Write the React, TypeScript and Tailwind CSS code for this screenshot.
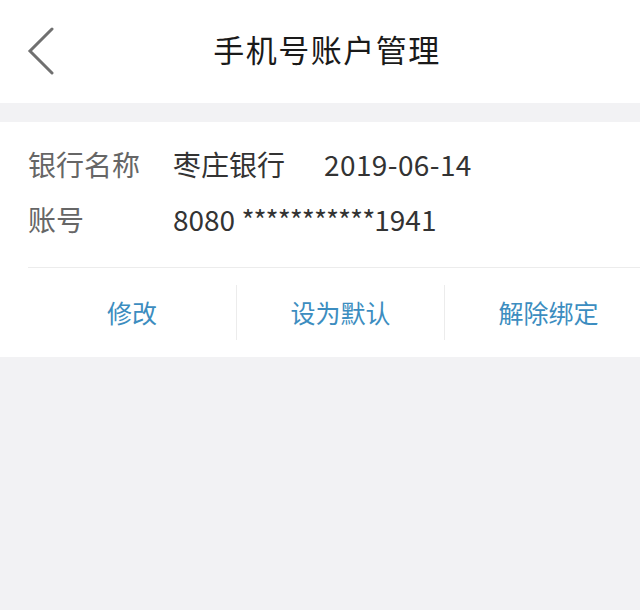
const font = { fontFamily: '"Noto Sans CJK SC", "Noto Sans", sans-serif' };

export default function App() {
    return (
        <div className="w-[640px] h-[610px] bg-[#f2f2f4] overflow-hidden" style={font}>
            <div className="h-[103px] bg-white flex items-center relative pb-[4px]">
                <svg className="absolute left-[26px] top-[27px]" width="30" height="48" viewBox="0 0 30 48">
                    <path d="M26 2 L4 24 L26 46" fill="none" stroke="#707070" strokeWidth="3" strokeLinecap="round" />
                </svg>
                <div className="w-full text-center text-[31px] text-[#1a1a1a] tracking-[1.5px] pl-[14px]">手机号账户管理</div>
            </div>
            <div className="mt-[19px] bg-white h-[235px] overflow-hidden">
                <div className="pl-[28px] pt-[15px] pb-[20px] text-[28px] leading-[55px]">
                    <div className="flex">
                        <span className="w-[145px] text-[#666666]">银行名称</span>
                        <span className="text-[#333333]">枣庄银行</span>
                        <span className="ml-[39px] text-[#333333] tracking-[0.4px]">2019-06-14</span>
                    </div>
                    <div className="flex">
                        <span className="w-[145px] text-[#666666]">账号</span>
                        <span className="text-[#333333] whitespace-pre">
                            8080 <span className="tracking-[-1px]">***********</span>1941
                        </span>
                    </div>
                </div>
                <div className="ml-[28px] border-t border-[#ececec] flex w-[624px] pt-[17px]">
                    <div className="w-[208px] h-[55px] flex items-center justify-center text-[25px] text-[#3c8dc0]">修改</div>
                    <div className="w-[208px] h-[55px] flex items-center justify-center text-[25px] text-[#3c8dc0] border-l border-[#ececec]">设为默认</div>
                    <div className="w-[208px] h-[55px] flex items-center justify-center text-[25px] text-[#3c8dc0] border-l border-[#ececec]">解除绑定</div>
                </div>
            </div>
        </div>
    );
}
